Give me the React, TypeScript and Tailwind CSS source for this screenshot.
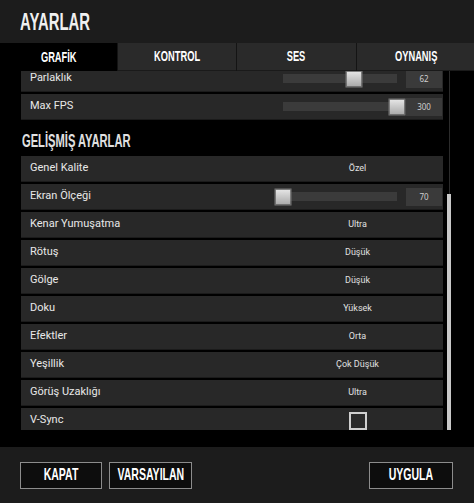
import React from "react"

const body = "font-['Roboto','Liberation_Sans',sans-serif]"

// The game UI uses a tall condensed face; squeeze Liberation Sans Bold to match.
function Cond({ children, className = "", left = false }: { children: React.ReactNode; className?: string; left?: boolean }) {
  return (
    <span
      className={`inline-block font-['Liberation_Sans',sans-serif] font-bold whitespace-nowrap scale-x-[0.62] ${
        left ? "origin-left" : "origin-center"
      } ${className}`}
    >
      {children}
    </span>
  )
}

type Row =
  | { label: string; kind: "value"; value: string }
  | { label: string; kind: "slider"; value: number; pct: number }
  | { label: string; kind: "check" }

const topRows: Row[] = [
  { label: "Parlaklık", kind: "slider", value: 62, pct: 0.62 },
  { label: "Max FPS", kind: "slider", value: 300, pct: 1 },
]

const advanced: Row[] = [
  { label: "Genel Kalite", kind: "value", value: "Özel" },
  { label: "Ekran Ölçeği", kind: "slider", value: 70, pct: 0 },
  { label: "Kenar Yumuşatma", kind: "value", value: "Ultra" },
  { label: "Rötuş", kind: "value", value: "Düşük" },
  { label: "Gölge", kind: "value", value: "Düşük" },
  { label: "Doku", kind: "value", value: "Yüksek" },
  { label: "Efektler", kind: "value", value: "Orta" },
  { label: "Yeşillik", kind: "value", value: "Çok Düşük" },
  { label: "Görüş Uzaklığı", kind: "value", value: "Ultra" },
  { label: "V-Sync", kind: "check" },
]

function Slider({ value, pct }: { value: number; pct: number }) {
  return (
    <div className="flex items-center h-full">
      <div className="relative ml-[10px] w-[114px] h-[9px] bg-[#3b3b3b]">
        <div
          className="absolute top-1/2 -translate-y-1/2 -translate-x-1/2 w-[17px] h-[17px] bg-gradient-to-b from-[#e6e6e6] to-[#a9a9a9] border border-[#777]"
          style={{ left: `${pct * 100}%` }}
        />
      </div>
      <div className="ml-[9px] w-[36px] h-[18px] bg-[#3a3a3a] flex items-center justify-center text-[8px] text-[#cfcfcf]">
        {value}
      </div>
    </div>
  )
}

function SettingRow({ row }: { row: Row }) {
  return (
    <div className="h-[26px] w-[422px] bg-[#282828] border-b border-[#1b1b1b] flex items-center">
      <span className={`${body} pl-[9px] w-[251px] text-[11px] text-[#e8e8e8]`}>{row.label}</span>
      <div className="flex-1 h-full flex items-center justify-center">
        {row.kind === "value" && (
          <span className={`${body} text-[9px] text-[#e0e0e0]`}>{row.value}</span>
        )}
        {row.kind === "slider" && <Slider value={row.value} pct={row.pct} />}
        {row.kind === "check" && (
          <div className="w-[18px] h-[18px] border-2 border-[#cfcfcf] bg-[#2a2a2a]" />
        )}
      </div>
    </div>
  )
}

const tabs = ["GRAFİK", "KONTROL", "SES", "OYNANIŞ"]

function FooterButton({ label, className = "" }: { label: string; className?: string }) {
  return (
    <button
      className={`h-[27px] border border-[#8c8c8c] bg-[#0d0d0d] text-white text-[17px] flex items-center justify-center ${className}`}
    >
      <Cond>{label}</Cond>
    </button>
  )
}

export default function App() {
  return (
    <div className="w-[474px] h-[503px] bg-[#1c1c1c] flex flex-col overflow-hidden">
      <div className="h-[43px] px-[20px] flex items-center">
        <h1 className="text-[24px] text-[#f0f0f0] leading-none">
          <Cond left>AYARLAR</Cond>
        </h1>
      </div>

      <div className="h-[28px] grid grid-cols-[117px_118px_119px_118px] gap-x-[1px] bg-[#141414]">
        {tabs.map((t, i) => (
          <div
            key={t}
            className={`flex items-center justify-center text-[15px] text-white ${
              i === 0 ? "bg-black" : "bg-[#2a2a2a] border-b border-[#1a1a1a]"
            }`}
          >
            <Cond>{t}</Cond>
          </div>
        ))}
      </div>

      <div className="relative h-[376px] bg-black">
        <div className="h-[359px] overflow-hidden">
          <div className="-mt-[5px] pl-[21px] flex flex-col gap-[2px]">
            {topRows.map((r) => (
              <SettingRow key={r.label} row={r} />
            ))}
            <div className="h-[32px] pt-[5px] text-[18px] text-[#e0e0e0] pl-[1px]">
              <Cond left>GELİŞMİŞ AYARLAR</Cond>
            </div>
            {advanced.map((r) => (
              <SettingRow key={r.label} row={r} />
            ))}
          </div>
        </div>
        <div className="absolute left-[449px] top-0 w-[1px] h-[359px] bg-[#2c2c2c]" />
        <div className="absolute left-[447px] top-[123px] w-[4px] h-[236px] bg-[#c9c9c9]" />
      </div>

      <div className="flex-1 flex items-center px-[20px]">
        <FooterButton label="KAPAT" className="w-[82px]" />
        <FooterButton label="VARSAYILAN" className="ml-[7px] w-[83px]" />
        <FooterButton label="UYGULA" className="ml-auto mr-[1px] w-[84px]" />
      </div>
    </div>
  )
}
